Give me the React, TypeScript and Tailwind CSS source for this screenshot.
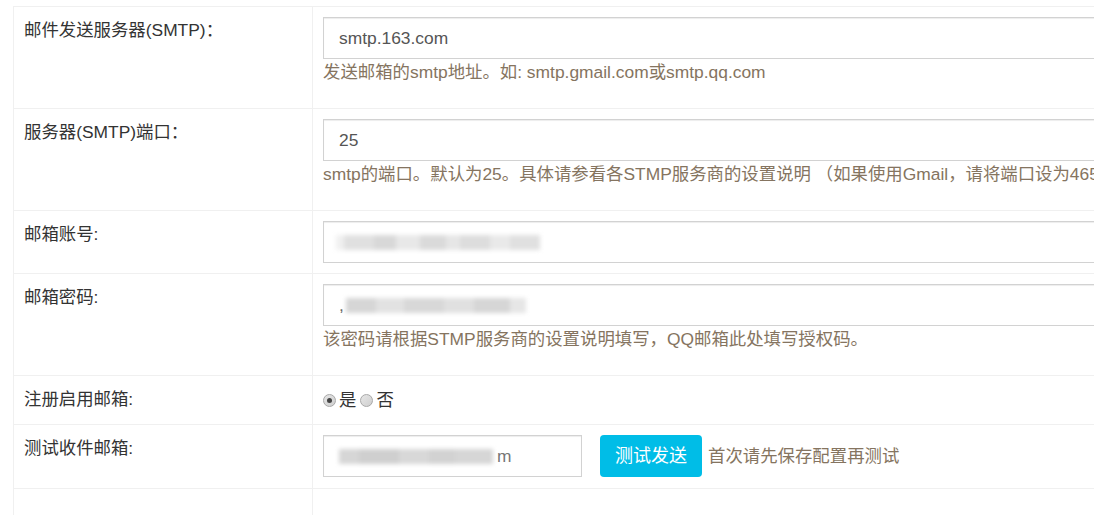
import React from 'react';

const font = { fontFamily: '"Liberation Sans", "Noto Sans CJK SC", sans-serif' };

type RowProps = {
  label: string;
  children: React.ReactNode;
  last?: boolean;
};

const Row = ({ label, children, last }: RowProps) => (
  <div className="flex border-t border-[#f0f0f0]">
    <div className="w-[299px] shrink-0 border-r border-[#f0f0f0] px-[10px] pt-[10px] pb-[10px] text-[#333] leading-[26px]">
      {label}
    </div>
    <div className={last ? 'flex-1 px-[10px] pt-[10px] pb-[11px]' : 'flex-1 p-[10px]'}>{children}</div>
  </div>
);

const Help = ({ children }: { children: React.ReactNode }) => (
  <div className="mt-[2px] mb-[15px] whitespace-nowrap leading-[22px] text-[#857460]">{children}</div>
);

const Field = ({ className = 'w-[900px]', children }: { className?: string; children: React.ReactNode }) => (
  <div
    className={`flex h-[42px] items-center border border-[#d2d2d2] bg-white px-[15px] text-[#555] shadow-[inset_0_1px_1px_rgba(0,0,0,0.075)] ${className}`}
  >
    {children}
  </div>
);

// masked (blurred) values from the original screenshot
const Smudge = ({ blocks }: { blocks: [number, string][] }) => (
  <div className="flex h-[15px] blur-[2px]">
    {blocks.map(([w, c], i) => (
      <span key={i} className="h-full" style={{ width: w, background: c }} />
    ))}
  </div>
);

const Radio = ({ checked }: { checked?: boolean }) => (
  <span className="flex h-[13px] w-[13px] items-center justify-center rounded-full border border-[#a8a8a8] bg-gradient-to-br from-[#e6e6e6] to-[#cfcfcf]">
    {checked && <span className="h-[5px] w-[5px] rounded-full bg-[#444]" />}
  </span>
);

export default function App() {
  return (
    <div className="h-[515px] w-full overflow-hidden bg-white pt-[6px] pl-[13px] text-[17.4px]" style={font}>
      <div className="w-[1300px] border-l border-[#f0f0f0]">
        <Row label="邮件发送服务器(SMTP)：">
          <Field>smtp.163.com</Field>
          <Help>发送邮箱的smtp地址。如: smtp.gmail.com或smtp.qq.com</Help>
        </Row>
        <Row label="服务器(SMTP)端口：">
          <Field>25</Field>
          <Help>smtp的端口。默认为25。具体请参看各STMP服务商的设置说明 （如果使用Gmail，请将端口设为465）</Help>
        </Row>
        <Row label="邮箱账号:">
          <Field className="w-[900px] !px-[12px]">
            <Smudge
              blocks={[
                [8, '#f0f0f0'],
                [30, '#e0e0e0'],
                [22, '#d8d8d8'],
                [24, '#e8e8e8'],
                [26, '#dadada'],
                [14, '#e6e6e6'],
                [30, '#dddddd'],
                [20, '#e9e9e9'],
                [30, '#e0e0e0'],
              ]}
            />
          </Field>
        </Row>
        <Row label="邮箱密码:">
          <Field>
            <span className="mr-[2px] text-[#666]">,</span>
            <Smudge
              blocks={[
                [30, '#d6d6d6'],
                [28, '#e2e2e2'],
                [40, '#d8d8d8'],
                [30, '#e0e0e0'],
                [36, '#d6d6d6'],
                [16, '#e6e6e6'],
              ]}
            />
          </Field>
          <Help>该密码请根据STMP服务商的设置说明填写，QQ邮箱此处填写授权码。</Help>
        </Row>
        <Row label="注册启用邮箱:">
          <div className="flex h-[28px] items-center text-[#333]">
            <Radio checked />
            <span className="ml-[3px] mr-[4px]">是</span>
            <Radio />
            <span className="ml-[3px]">否</span>
          </div>
        </Row>
        <Row label="测试收件邮箱:" last>
          <div className="flex items-center">
            <Field className="w-[259px]">
              <Smudge
                blocks={[
                  [20, '#d6d6d6'],
                  [40, '#cfcfcf'],
                  [30, '#d8d8d8'],
                  [26, '#d2d2d2'],
                  [38, '#d6d6d6'],
                ]}
              />
              <span className="ml-[4px] text-[#777]">m</span>
            </Field>
            <button
              type="button"
              className="ml-[18px] h-[42px] w-[102px] rounded-[4px] bg-[#00bde7] text-[18px] text-white"
            >
              测试发送
            </button>
            <span className="ml-[6px] text-[#857460]">首次请先保存配置再测试</span>
          </div>
        </Row>
        <div className="h-[40px] border-t border-[#f0f0f0]">
          <div className="h-full w-[299px] border-r border-[#f0f0f0]" />
        </div>
      </div>
    </div>
  );
}
